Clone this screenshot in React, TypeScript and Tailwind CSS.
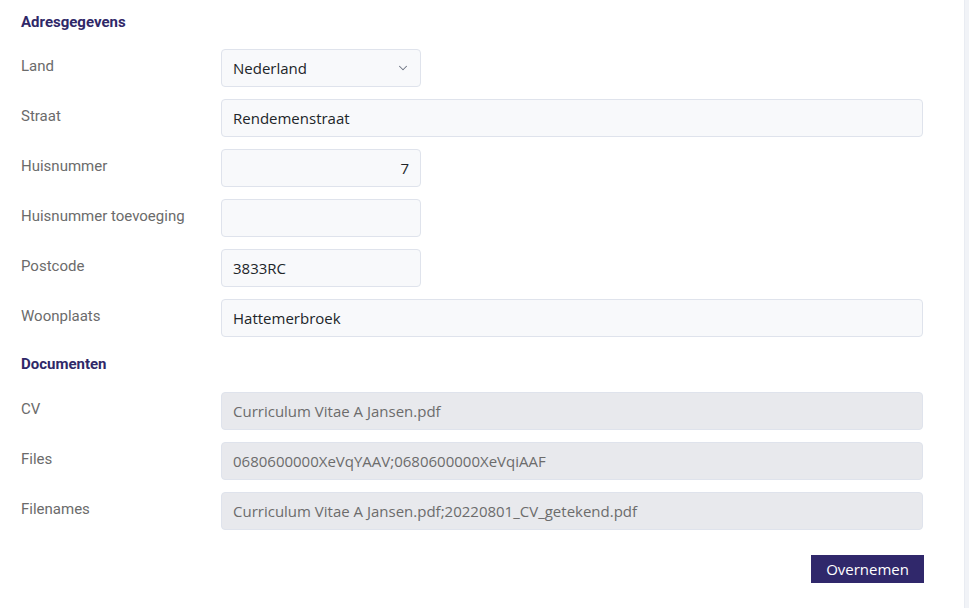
import { ChevronDown } from 'lucide-react';

const inputBase =
    'h-[38px] rounded-[4px] border border-[#dfe3ec] px-[11px] text-[15px] flex items-center font-["Open_Sans",sans-serif]';

function Row({ label, children }: { label: string; children: React.ReactNode }) {
    return (
        <div className="flex items-start h-[50px]">
            <div className="w-[200px] pt-[6px] text-[15px] text-[#6b6b6b] font-['Roboto',sans-serif]">{label}</div>
            {children}
        </div>
    );
}

function Field({ value, short, right }: { value: string; short?: boolean; right?: boolean }) {
    return (
        <div
            className={`${inputBase} bg-[#f8f9fb] text-[#212529] ${short ? 'w-[200px]' : 'w-[702px]'} ${right ? 'justify-end' : ''}`}
        >
            {value}
        </div>
    );
}

function ReadOnly({ value }: { value: string }) {
    return <div className={`${inputBase} w-[702px] bg-[#e8e9ed] text-[#6c6c6c]`}>{value}</div>;
}

function Heading({ children }: { children: React.ReactNode }) {
    return (
        <h2 className="text-[15px] font-bold text-[#2f2868] font-['Roboto',sans-serif] leading-none">{children}</h2>
    );
}

export default function App() {
    return (
        <div className="flex w-[969px] h-[608px] bg-white overflow-hidden">
            <div className="flex-1 pl-[21px] pt-[15px]">
                <Heading>Adresgegevens</Heading>
                <div className="mt-[19px]">
                    <Row label="Land">
                        <div className={`${inputBase} w-[200px] bg-[#f8f9fb] text-[#212529] justify-between pr-[10px]`}>
                            <span>Nederland</span>
                            <ChevronDown size={14} strokeWidth={1.75} className="text-[#6b7280]" />
                        </div>
                    </Row>
                    <Row label="Straat">
                        <Field value="Rendemenstraat" />
                    </Row>
                    <Row label="Huisnummer">
                        <Field value="7" short right />
                    </Row>
                    <Row label="Huisnummer toevoeging">
                        <Field value="" short />
                    </Row>
                    <Row label="Postcode">
                        <Field value="3833RC" short />
                    </Row>
                    <Row label="Woonplaats">
                        <Field value="Hattemerbroek" />
                    </Row>
                </div>
                <div className="mt-[8px]">
                    <Heading>Documenten</Heading>
                </div>
                <div className="mt-[20px]">
                    <Row label="CV">
                        <ReadOnly value="Curriculum Vitae A Jansen.pdf" />
                    </Row>
                    <Row label="Files">
                        <ReadOnly value="0680600000XeVqYAAV;0680600000XeVqiAAF" />
                    </Row>
                    <Row label="Filenames">
                        <ReadOnly value="Curriculum Vitae A Jansen.pdf;20220801_CV_getekend.pdf" />
                    </Row>
                </div>
                <div className="flex justify-end w-[903px] mt-[13px]">
                    <button className="h-[28px] px-[15px] bg-[#30286b] text-white text-[15px] font-['Open_Sans',sans-serif]">
                        Overnemen
                    </button>
                </div>
            </div>
            <div className="w-[5px] bg-[#f1f3f7] border-l border-[#e9ecf2]" />
        </div>
    );
}
